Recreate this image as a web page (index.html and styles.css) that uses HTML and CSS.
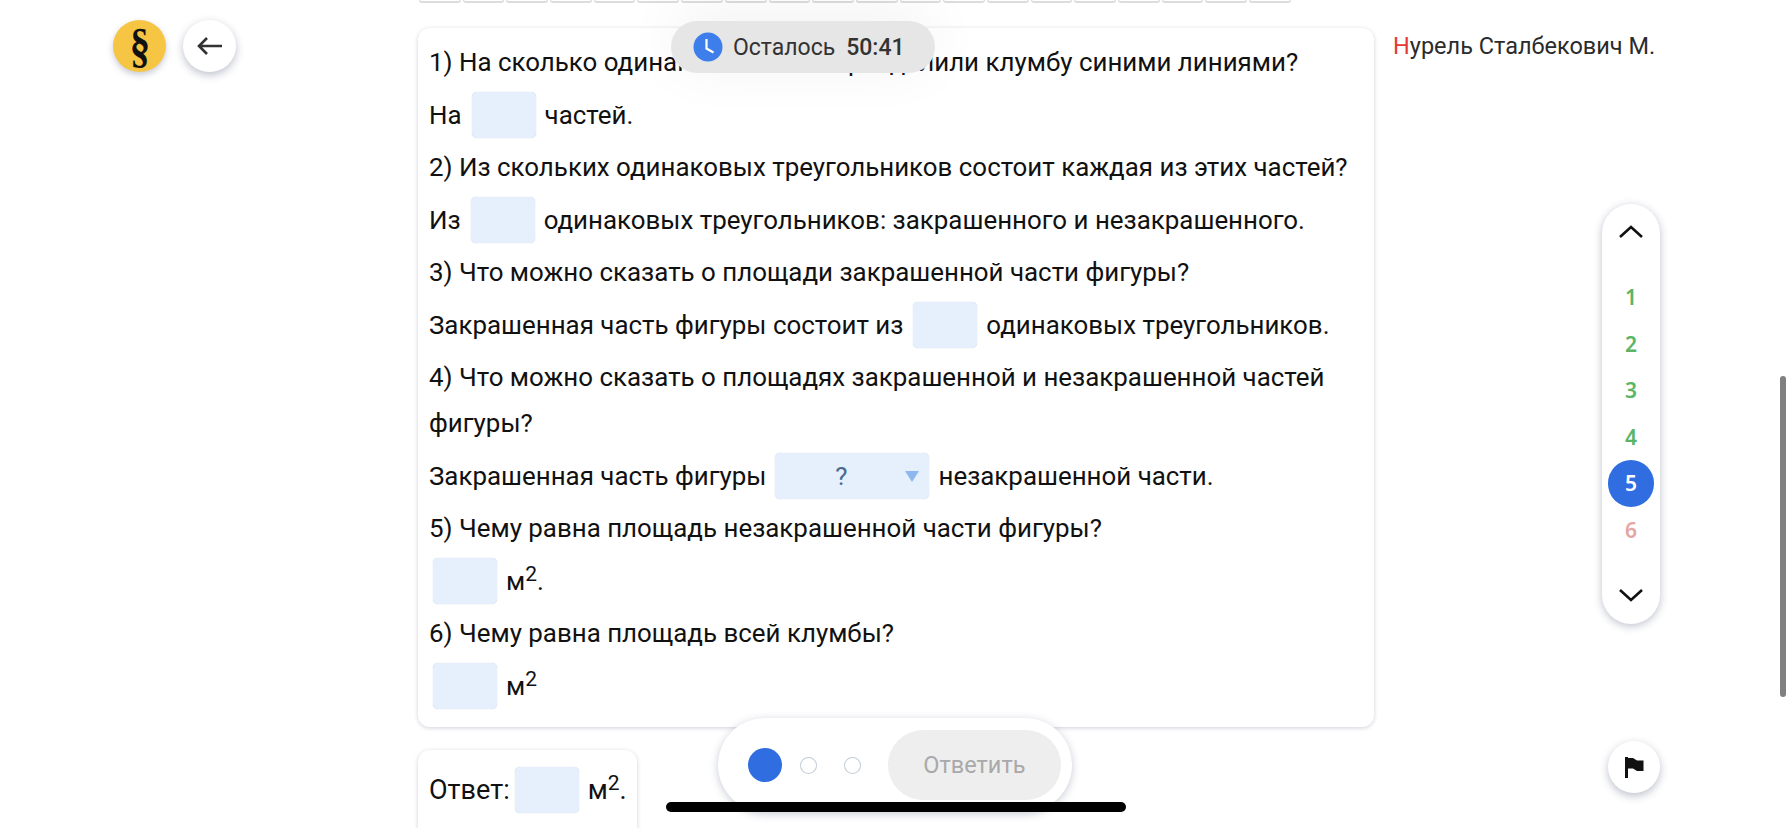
FILE: index.html
```html
<!DOCTYPE html>
<html lang="en">
<head>
    <meta charset="UTF-8">
    <meta name="viewport" content="width=device-width, initial-scale=1.0">
    <title>Задание</title>
    <link rel="stylesheet" href="styles.css">
</head>
<body>
    <div class="main-column">
        <div class="cell-strip">
            <span></span><span></span><span></span><span></span><span></span><span></span><span></span>
            <span></span><span></span><span></span><span></span><span></span><span></span><span></span>
            <span></span><span></span><span></span><span></span><span></span><span></span>
        </div>
        <div class="card task-card">
            <p class="line">1) На сколько одинаковых частей разделили клумбу синими линиями?</p>
            <p class="line row">На <span class="blank"></span> частей.</p>
            <p class="line">2) Из скольких одинаковых треугольников состоит каждая из этих частей?</p>
            <p class="line row">Из <span class="blank"></span> одинаковых треугольников: закрашенного и незакрашенного.</p>
            <p class="line">3) Что можно сказать о площади закрашенной части фигуры?</p>
            <p class="line row">Закрашенная часть фигуры состоит из <span class="blank"></span> одинаковых треугольников.</p>
            <p class="line">4) Что можно сказать о площадях закрашенной и незакрашенной частей фигуры?</p>
            <p class="line row">Закрашенная часть фигуры
                <span class="picker"><span class="picker-value">?</span><span class="picker-arrow"></span></span>
                незакрашенной части.</p>
            <p class="line">5) Чему равна площадь незакрашенной части фигуры?</p>
            <p class="line row indent"><span class="blank"></span> <span>м<sup>2</sup>.</span></p>
            <p class="line">6) Чему равна площадь всей клумбы?</p>
            <p class="line row indent"><span class="blank"></span> <span>м<sup>2</sup></span></p>
        </div>
        <div class="card answer-card">
            <span>Ответ:</span> <span class="blank"></span> <span>м<sup>2</sup>.</span>
        </div>
    </div>

    <div class="top-left">
        <div class="logo"><span class="logo-mark">§</span></div>
        <button class="round-btn">
            <svg width="27" height="22" viewBox="0 0 27 22" fill="none" stroke="#333" stroke-width="2.6">
                <path d="M26 11H3M11 3l-8 8 8 8"/>
            </svg>
        </button>
    </div>

    <div class="timer">
        <svg class="timer-icon" width="30" height="30" viewBox="0 0 30 30">
            <circle cx="15" cy="15" r="14.5" fill="#3d7eea"/>
            <path d="M13.5 7v9.5l7 4" fill="none" stroke="#fff" stroke-width="2.2"/>
        </svg>
        <span>Осталось</span>
        <b>50:41</b>
    </div>

    <div class="user-name"><span class="first-letter">Н</span>урель Сталбекович М.</div>

    <div class="step-rail">
        <svg width="24" height="14" viewBox="0 0 24 14" fill="none" stroke="#111" stroke-width="2.6"><path d="M1 12L12 2l11 10"/></svg>
        <ul class="step-list">
            <li class="done">1</li>
            <li class="done">2</li>
            <li class="done">3</li>
            <li class="done">4</li>
            <li class="active">5</li>
            <li class="wrong">6</li>
        </ul>
        <svg width="24" height="14" viewBox="0 0 24 14" fill="none" stroke="#111" stroke-width="2.6"><path d="M1 2l11 10L23 2"/></svg>
    </div>

    <div class="scroll-thumb"></div>

    <button class="round-btn flag-btn">
        <svg width="19" height="21" viewBox="0 0 19 21" fill="#111">
            <path d="M0 0h3v21H0zM3 1h5l4 2.500h6.500V14h-6.500l-4-2.500H3z"/>
        </svg>
    </button>

    <div class="submit-bar">
        <span class="dot dot-active"></span>
        <span class="dot"></span>
        <span class="dot"></span>
        <button class="submit-btn">Ответить</button>
    </div>

    <div class="home-indicator"></div>
</body>
</html>
```

FILE: styles.css
```css
body {
    margin: 0;
    height: 828px;
    overflow: hidden;
    position: relative;
    background-color: #fff;
    font-family: Roboto, 'Noto Sans', sans-serif;
    font-size: 25.9px;
    color: #111;
}
button {
    font-family: inherit;
    border: none;
    padding: 0;
}
.main-column {
    width: 956px;
    margin-left: 418px;
}
.cell-strip {
    display: flex;
    gap: 2px;
    height: 3px;
    margin-bottom: 25px;
    padding-left: 1px;
}
.cell-strip span {
    width: 41.7px;
    height: 3px;
    box-sizing: border-box;
    border: 1px solid #dcdcdc;
    border-top: none;
    border-bottom-width: 2px;
    border-radius: 0 0 3px 3px;
}
.card {
    background-color: #fff;
    border-radius: 12px;
    box-shadow: 0 1px 4px rgba(40, 50, 90, 0.22);
}
.task-card {
    height: 699px;
    box-sizing: border-box;
    padding: 11px 11px 0;
}
.line {
    margin: 0 0 6.5px;
    line-height: 46px;
}
.row {
    display: flex;
    align-items: center;
    gap: 9px;
    height: 46px;
}
.indent {
    padding-left: 4px;
}
.blank {
    display: block;
    width: 64px;
    height: 46px;
    margin-left: 1px;
    background-color: #e5f0fc;
    border-radius: 5px;
    box-shadow: 0 0 1px rgba(60, 100, 160, 0.4);
    flex-shrink: 0;
}
.indent .blank {
    margin-left: 0;
}
sup {
    font-size: 21px;
    line-height: 0;
    vertical-align: 9px;
}
.picker {
    display: block;
    position: relative;
    width: 154px;
    height: 46px;
    line-height: 46px;
    background-color: #e5f0fc;
    border-radius: 5px;
    box-shadow: 0 0 1px rgba(60, 100, 160, 0.4);
}
.picker-value {
    display: block;
    width: 132px;
    text-align: center;
    color: #4a6a8c;
}
.picker-arrow {
    position: absolute;
    top: 18px;
    right: 10px;
    border-left: 7px solid transparent;
    border-right: 7px solid transparent;
    border-top: 11px solid #8cb8ee;
}
.answer-card {
    display: flex;
    align-items: center;
    gap: 9px;
    width: 219px;
    height: 100px;
    box-sizing: border-box;
    margin-top: 23px;
    padding: 0 11px 20px;
    font-size: 27px;
}
.answer-card .blank {
    margin-left: -4px;
}
.top-left {
    position: absolute;
    top: 20px;
    left: 113px;
    display: flex;
    gap: 17px;
}
.logo {
    width: 53px;
    height: 52px;
    border-radius: 50%;
    background-color: #f6c544;
    box-shadow: 0 3px 6px rgba(40, 50, 90, 0.25);
    font-family: 'Liberation Serif', serif;
    font-weight: bold;
    font-size: 48px;
    line-height: 52px;
    text-align: center;
}
.logo-mark {
    display: inline-block;
    transform: scaleX(0.85);
}
.round-btn {
    display: flex;
    align-items: center;
    justify-content: center;
    width: 53px;
    height: 52px;
    border-radius: 50%;
    background-color: #fff;
    box-shadow: 0 3px 8px rgba(40, 50, 90, 0.3);
}
.timer {
    position: absolute;
    top: 21px;
    left: 671px;
    display: flex;
    align-items: center;
    width: 264px;
    height: 52px;
    box-sizing: border-box;
    padding-left: 22px;
    border-radius: 26px;
    background-color: #e6e6e6;
    box-shadow: 0 -8px 60px rgba(0, 0, 0, 0.06);
    font-size: 23px;
    color: #333;
}
.timer-icon {
    margin-right: 10px;
}
.timer b {
    margin-left: 11px;
    font-weight: 500;
}
.user-name {
    position: absolute;
    top: 32px;
    left: 1393px;
    font-size: 23.5px;
    line-height: 28px;
    color: #2b2b2b;
}
.first-letter {
    color: #e53935;
}
.step-rail {
    position: absolute;
    top: 204px;
    left: 1602px;
    display: flex;
    flex-direction: column;
    align-items: center;
    width: 58px;
    height: 420px;
    box-sizing: border-box;
    padding-top: 21px;
    border-radius: 29px;
    background-color: #fff;
    box-shadow: 0 2px 8px rgba(40, 50, 90, 0.3);
}
.step-list {
    list-style: none;
    margin: 35px 0 35px;
    padding: 0;
    font-family: 'Noto Sans', sans-serif;
    font-size: 21px;
    font-weight: 600;
    text-align: center;
}
.step-list li {
    width: 46px;
    height: 46.5px;
    line-height: 46.5px;
    border-radius: 50%;
}
.done {
    color: #5cb566;
}
.wrong {
    color: #e5a5a2;
}
.step-list .active {
    background-color: #2f6de0;
    color: #fff;
}
.scroll-thumb {
    position: absolute;
    top: 376px;
    left: 1780px;
    width: 6px;
    height: 321px;
    border-radius: 3px;
    background-color: #808080;
}
.flag-btn {
    position: absolute;
    top: 741px;
    left: 1608px;
    width: 52px;
}
.submit-bar {
    position: absolute;
    top: 718px;
    left: 718px;
    display: flex;
    align-items: center;
    width: 354px;
    height: 94px;
    box-sizing: border-box;
    padding: 0 11px 0 30px;
    border-radius: 47px;
    background-color: #fff;
    box-shadow: 0 2px 8px rgba(40, 50, 90, 0.25);
}
.dot {
    width: 17px;
    height: 17px;
    box-sizing: border-box;
    margin-right: 27px;
    border: 1px solid #c4ccd6;
    border-radius: 50%;
}
.dot-active {
    width: 34px;
    height: 34px;
    margin-right: 18px;
    border: none;
    background-color: #2f6de0;
}
.submit-btn {
    width: 174px;
    height: 70px;
    margin-left: auto;
    border-radius: 35px;
    background-color: #eeeeef;
    color: #a9a9a9;
    font-size: 23.5px;
}
.home-indicator {
    position: absolute;
    top: 802px;
    left: 666px;
    width: 460px;
    height: 10px;
    border-radius: 5px;
    background-color: #000;
}
```
